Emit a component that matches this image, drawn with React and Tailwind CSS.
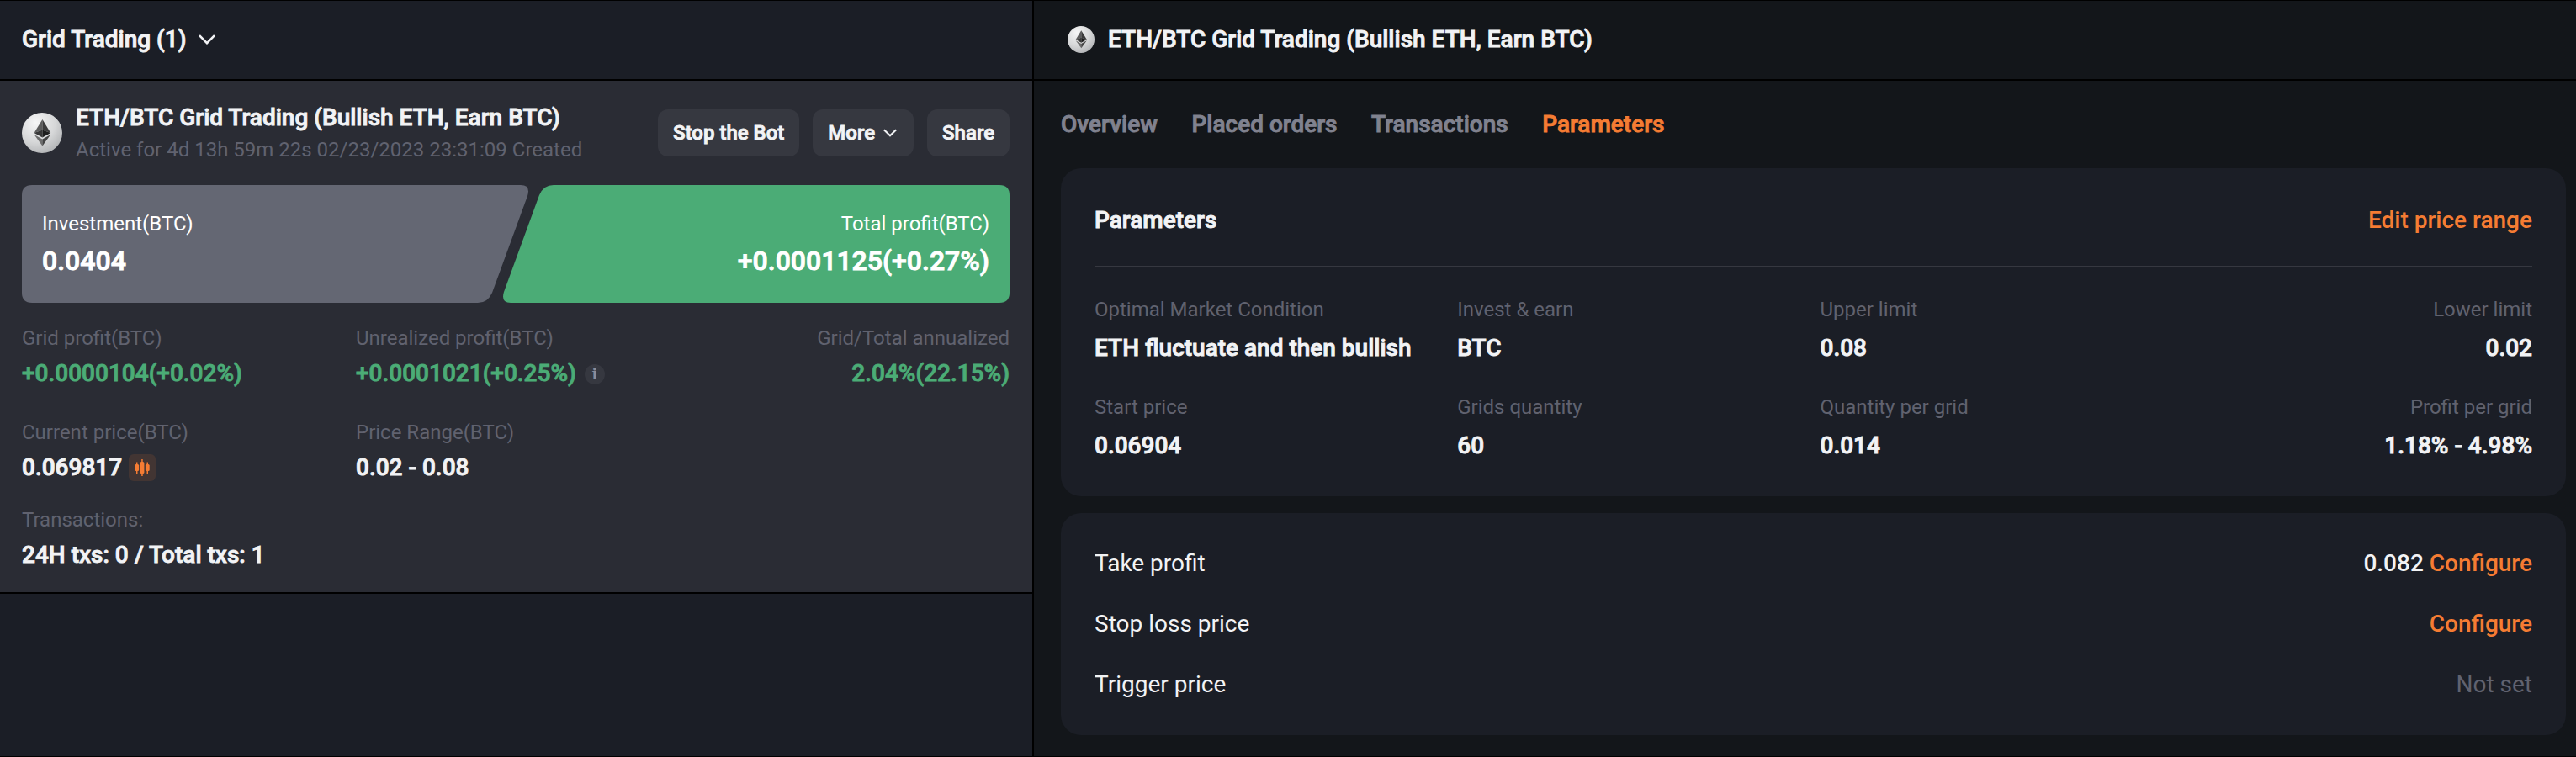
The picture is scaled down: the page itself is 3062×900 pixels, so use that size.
import React, { useId } from 'react'

const EthIcon = ({ className }) => {
  const id = useId()
  return (
    <svg viewBox="0 0 48 48" className={className}>
      <defs>
        <radialGradient id={id} cx="0.35" cy="0.25" r="0.8">
          <stop offset="0" stopColor="#f6f6f6" />
          <stop offset="0.6" stopColor="#d6d7d8" />
          <stop offset="1" stopColor="#b2b4b6" />
        </radialGradient>
      </defs>
      <circle cx="24" cy="24" r="24" fill={`url(#${id})`} />
      <path d="M24.400 8 14.600 24 24.400 20.500Z" fill="#5c5c5c" />
      <path d="M24.400 8 34.200 24 24.400 20.500Z" fill="#3c3c3c" />
      <path d="M14.600 24 24.400 20.500V29.500Z" fill="#383838" />
      <path d="M34.200 24 24.400 20.500V29.500Z" fill="#1e1e1e" />
      <path d="M14.600 26 24.400 31.500V39.500Z" fill="#6e6e6e" />
      <path d="M34.200 26 24.400 31.500V39.500Z" fill="#444" />
    </svg>
  )
}

const Chevron = ({ className }) => (
  <svg viewBox="0 0 20 12" className={className} fill="none" stroke="#f2f3f5" strokeWidth="2.6">
    <path d="M1 1.2 10 10.2 19 1.2" />
  </svg>
)

const CandleIcon = () => (
  <svg viewBox="0 0 32 32" className="w-8 h-8" fill="#f57c33">
    <rect width="32" height="32" rx="6" fill="#f57c33" fillOpacity="0.12" />
    <rect x="9" y="9.500" width="1.500" height="13.500" />
    <rect x="7.300" y="12" width="4.800" height="8" rx="1.500" />
    <rect x="15.200" y="6" width="1.500" height="20" />
    <rect x="13.600" y="9" width="4.800" height="14" rx="1.500" />
    <rect x="21.500" y="9.500" width="1.500" height="13.500" />
    <rect x="19.900" y="12" width="4.800" height="8" rx="1.500" />
  </svg>
)

// medium weight thickened by a thin stroke, keeps the narrower letter widths
const Bold = ({ children, className }) => (
  <span className={`font-medium whitespace-nowrap [-webkit-text-stroke:0.9px_currentColor] ${className || 'text-[28px] leading-[33px]'}`}>
    {children}
  </span>
)

const Button = ({ children }) => (
  <button className="h-14 rounded-xl bg-[#363840] px-[18px] flex items-center">
    {children}
  </button>
)

const Stat = ({ label, value, green, right, icon }) => (
  <div className={`flex flex-col ${right ? 'items-end' : 'items-start'}`}>
    <span className="text-2xl leading-7 text-[#60626f]">{label}</span>
    <div className={`mt-[11px] h-[34px] flex items-start ${green ? 'text-[#4bac76]' : ''}`}>
      <Bold>{value}</Bold>
      {icon}
    </div>
  </div>
)

const Param = ({ label, value, right }) => (
  <div className={`flex flex-col ${right ? 'items-end' : 'items-start'}`}>
    <span className="mb-[15px] text-2xl leading-7 text-[#60626f]">{label}</span>
    <Bold>{value}</Bold>
  </div>
)

const tabs = ['Overview', 'Placed orders', 'Transactions', 'Parameters']

const params = [
  { label: 'Optimal Market Condition', value: 'ETH fluctuate and then bullish' },
  { label: 'Invest & earn', value: 'BTC' },
  { label: 'Upper limit', value: '0.08' },
  { label: 'Lower limit', value: '0.02' },
  { label: 'Start price', value: '0.06904' },
  { label: 'Grids quantity', value: '60' },
  { label: 'Quantity per grid', value: '0.014' },
  { label: 'Profit per grid', value: '1.18% - 4.98%' },
]

const BotCard = () => (
  <div className="h-[610px] bg-[#2a2c34] border-b-2 border-black pl-[26px] pr-[27px] pt-[27px]">
    <div className="h-[70px] flex items-center justify-between">
      <div className="flex items-center">
        <EthIcon className="w-12 h-12" />
        <div className="ml-4 pb-px flex flex-col whitespace-nowrap">
          <Bold>ETH/BTC Grid Trading (Bullish ETH, Earn BTC)</Bold>
          <span className="mt-2 text-2xl leading-7 text-[#60626f]">Active for 4d 13h 59m 22s 02/23/2023 23:31:09 Created</span>
        </div>
      </div>
      <div className="flex gap-4">
        <Button>
          <Bold className="text-2xl leading-7">Stop the Bot</Bold>
        </Button>
        <Button>
          <Bold className="text-2xl leading-7">More</Bold>
          <Chevron className="w-4 h-[10px] ml-[10px] mr-0.5" />
        </Button>
        <Button>
          <Bold className="text-2xl leading-7">Share</Bold>
        </Button>
      </div>
    </div>

    <div className="relative mt-[27px] h-[140px]">
      <svg viewBox="0 0 1174 140" className="absolute inset-0 w-full h-full">
        <path d="M12 0H593Q605 0 601 13L559 128Q554 140 542 140H12Q0 140 0 128V12Q0 0 12 0Z" fill="#646773" />
        <path d="M632 0H1162Q1174 0 1174 12V128Q1174 140 1162 140H581Q569 140 573 127L615 12Q620 0 632 0Z" fill="#4bac76" />
      </svg>
      <div className="relative h-full px-6 pt-8 flex justify-between text-white">
        <div className="flex flex-col">
          <span className="mb-[11px] text-2xl leading-7">Investment(BTC)</span>
          <Bold className="text-[32px] leading-[38px]">0.0404</Bold>
        </div>
        <div className="flex flex-col items-end">
          <span className="mb-[11px] text-2xl leading-7">Total profit(BTC)</span>
          <Bold className="text-[32px] leading-[38px]">+0.0001125(+0.27%)</Bold>
        </div>
      </div>
    </div>

    <div className="mt-7 grid grid-cols-[397px_397px_1fr] gap-y-[39px]">
      <Stat label="Grid profit(BTC)" value="+0.0000104(+0.02%)" green />
      <Stat
        label="Unrealized profit(BTC)"
        value="+0.0001021(+0.25%)"
        green
        icon={
          <span className="ml-[10px] mt-1.5 w-6 h-6 rounded-full bg-[#363840] text-[#8b8d99] text-[18px] leading-6 font-bold font-['DejaVu_Serif',serif] text-center">
            i
          </span>
        }
      />
      <Stat label="Grid/Total annualized" value="2.04%(22.15%)" green right />
      <Stat label="Current price(BTC)" value="0.069817" icon={<span className="ml-2 mt-px"><CandleIcon /></span>} />
      <Stat label="Price Range(BTC)" value="0.02 - 0.08" />
    </div>
    <div className="mt-[31px]">
      <Stat label="Transactions:" value="24H txs: 0 / Total txs: 1" />
    </div>
  </div>
)

const SettingRow = ({ label, children }) => (
  <div className="h-[72px] pb-px flex items-center justify-between text-[28px] leading-[33px]">
    <span>{label}</span>
    <span className="font-medium">{children}</span>
  </div>
)

const App = () => {
  return (
    <div className="w-[3062px] h-[900px] overflow-hidden flex border-y border-black bg-[#13161a] text-[#f2f3f5] font-['Roboto',sans-serif]">
      <div className="w-[1229px] shrink-0 border-r-2 border-black bg-[#1b1e26]">
        <div className="h-[95px] border-b-2 border-black px-[26px] pb-0.5 flex items-center">
          <Bold>Grid Trading (1)</Bold>
          <Chevron className="w-5 h-3 ml-3.5 mt-px" />
        </div>
        <BotCard />
      </div>

      <div className="flex-1">
        <div className="h-[95px] border-b-2 border-black pl-10 pb-0.5 flex items-center">
          <EthIcon className="w-8 h-8 mr-4 mt-px" />
          <Bold>ETH/BTC Grid Trading (Bullish ETH, Earn BTC)</Bold>
        </div>

        <div className="pl-8 pr-3">
          <div className="h-[104px] pb-px flex items-center gap-[40.5px] text-[#80828f]">
            {tabs.map((tab) => (
              <div key={tab} className={`flex ${tab === 'Parameters' ? 'text-[#f57c33]' : ''}`}>
                <Bold>{tab}</Bold>
              </div>
            ))}
          </div>

          <div className="h-[390px] rounded-3xl bg-[#1b1e26] px-10">
            <div className="h-[118px] pt-[7px] border-b-2 border-[#363840] flex items-center justify-between">
              <Bold>Parameters</Bold>
              <span className="text-[28px] leading-[33px] font-medium text-[#f57c33]">Edit price range</span>
            </div>
            <div className="pt-9 grid grid-cols-4 gap-x-4 gap-y-10">
              {params.map((p, i) => (
                <Param key={p.label} label={p.label} value={p.value} right={i % 4 === 3} />
              ))}
            </div>
          </div>

          <div className="mt-5 h-[264px] rounded-3xl bg-[#1b1e26] px-10 pt-6">
            <SettingRow label="Take profit">
              0.082 <span className="text-[#f57c33]">Configure</span>
            </SettingRow>
            <SettingRow label="Stop loss price">
              <span className="text-[#f57c33]">Configure</span>
            </SettingRow>
            <SettingRow label="Trigger price">
              <span className="font-normal text-[#60626f]">Not set</span>
            </SettingRow>
          </div>
        </div>
      </div>
    </div>
  )
}

export default App
